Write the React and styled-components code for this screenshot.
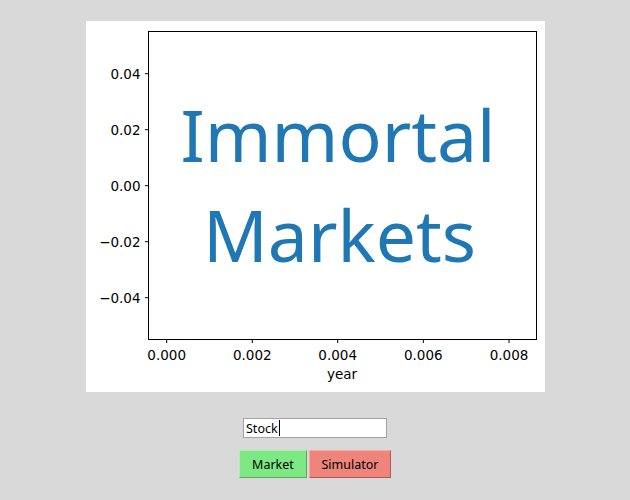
import React from 'react'
import styled, { createGlobalStyle } from 'styled-components'

const GlobalStyle = createGlobalStyle`
  html, body {
    margin: 0;
    padding: 0;
    background: #d9d9d9;
  }
  body {
    font-family: "DejaVu Sans", sans-serif;
  }
`

const Window = styled.div`
  width: 630px;
  height: 500px;
  display: flex;
  flex-direction: column;
  align-items: center;
  padding-top: 21px;
  box-sizing: border-box;
`

const Figure = styled.div`
  width: 459px;
  height: 371px;
  background: #fff;
  line-height: 0;
`

const Entry = styled.div`
  margin-top: 26px;
  width: 144px;
  height: 20px;
  box-sizing: border-box;
  border: 1px solid #a3a3a3;
  background: #fff;
  display: flex;
  align-items: center;
  padding-left: 2px;
  font-family: "Noto Sans", sans-serif;
  font-size: 12.5px;
  color: #000;
`

const Caret = styled.span`
  display: inline-block;
  width: 1px;
  height: 16px;
  background: #000;
  margin-left: 1px;
`

const ButtonRow = styled.div`
  margin-top: 12px;
  display: flex;
  gap: 2px;
`

const Button = styled.button`
  width: ${p => p.$w}px;
  height: 28px;
  box-sizing: border-box;
  background: ${p => p.$bg};
  border: 1px solid;
  border-color: ${p => p.$light} ${p => p.$dark} ${p => p.$dark} ${p => p.$light};
  font-family: "Noto Sans", sans-serif;
  font-size: 12.5px;
  color: #000;
  padding: 0;
  cursor: pointer;
`

const yTicks = [
  { label: '0.04', y: 52.7 },
  { label: '0.02', y: 108.7 },
  { label: '0.00', y: 164.7 },
  { label: '\u22120.02', y: 220.7 },
  { label: '\u22120.04', y: 276.7 },
]

const xTicks = [
  { label: '0.000', x: 80.7 },
  { label: '0.002', x: 166.3 },
  { label: '0.004', x: 251.7 },
  { label: '0.006', x: 337.3 },
  { label: '0.008', x: 423 },
]

function Chart() {
  const left = 62.5
  const top = 10.5
  const right = 450.5
  const bottom = 318.5
  return (
    <svg width="459" height="371" viewBox="0 0 459 371">
      <rect
        x={left}
        y={top}
        width={right - left}
        height={bottom - top}
        fill="none"
        stroke="#000"
        strokeWidth="1"
      />
      {yTicks.map(t => (
        <g key={t.label}>
          <line x1={left - 3.5} x2={left} y1={t.y} y2={t.y} stroke="#000" strokeWidth="1" />
          <text
            x={left - 8}
            y={t.y + 5}
            textAnchor="end"
            fontFamily="DejaVu Sans, sans-serif"
            fontSize="13.5"
            fill="#000"
          >
            {t.label}
          </text>
        </g>
      ))}
      {xTicks.map(t => (
        <g key={t.label}>
          <line x1={t.x} x2={t.x} y1={bottom} y2={bottom + 3.5} stroke="#000" strokeWidth="1" />
          <text
            x={t.x}
            y={339}
            textAnchor="middle"
            fontFamily="DejaVu Sans, sans-serif"
            fontSize="13.5"
            fill="#000"
          >
            {t.label}
          </text>
        </g>
      ))}
      <text
        x={256}
        y={358}
        textAnchor="middle"
        fontFamily="DejaVu Sans, sans-serif"
        fontSize="13.5"
        fill="#000"
      >
        year
      </text>
      <text
        x={252}
        y={140.7}
        textAnchor="middle"
        fontFamily="Noto Sans, sans-serif"
        fontSize="71.5"
        fill="#1f77b4"
      >
        Immortal
      </text>
      <text
        x={253.5}
        y={240.7}
        textAnchor="middle"
        fontFamily="Noto Sans, sans-serif"
        fontSize="71.5"
        fill="#1f77b4"
      >
        Markets
      </text>
    </svg>
  )
}

function App() {
  return (
    <Window>
      <GlobalStyle />
      <Figure>
        <Chart />
      </Figure>
      <Entry>
        Stock
        <Caret />
      </Entry>
      <ButtonRow>
        <Button $w={68} $bg="#7de884" $light="#a9f2ae" $dark="#5aa860">
          Market
        </Button>
        <Button $w={82} $bg="#ee847a" $light="#f5aba4" $dark="#a85a53">
          Simulator
        </Button>
      </ButtonRow>
    </Window>
  )
}

export default App
